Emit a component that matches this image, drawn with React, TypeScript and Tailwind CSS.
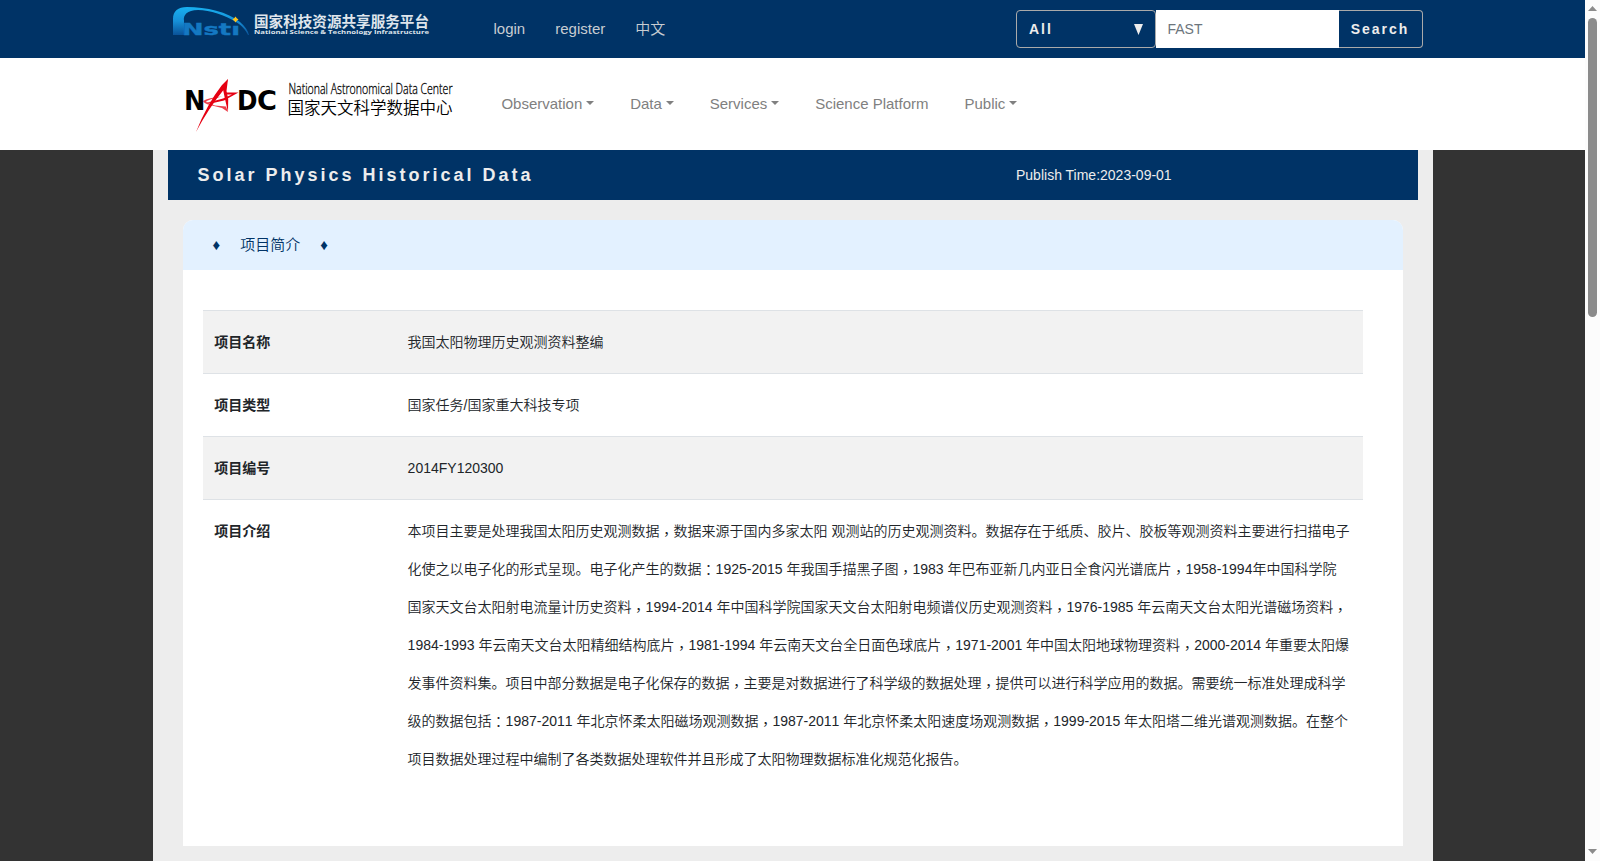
import React from "react";

const rows: { label: string; lines: string[] }[] = [
  { label: "项目名称", lines: ["我国太阳物理历史观测资料整编"] },
  { label: "项目类型", lines: ["国家任务/国家重大科技专项"] },
  { label: "项目编号", lines: ["2014FY120300"] },
  {
    label: "项目介绍",
    lines: [
      "本项目主要是处理我国太阳历史观测数据，数据来源于国内多家太阳 观测站的历史观测资料。数据存在于纸质、胶片、胶板等观测资料主要进行扫描电子",
      "化使之以电子化的形式呈现。电子化产生的数据：1925-2015 年我国手描黑子图，1983 年巴布亚新几内亚日全食闪光谱底片，1958-1994年中国科学院",
      "国家天文台太阳射电流量计历史资料，1994-2014 年中国科学院国家天文台太阳射电频谱仪历史观测资料，1976-1985 年云南天文台太阳光谱磁场资料，",
      "1984-1993 年云南天文台太阳精细结构底片，1981-1994 年云南天文台全日面色球底片，1971-2001 年中国太阳地球物理资料，2000-2014 年重要太阳爆",
      "发事件资料集。项目中部分数据是电子化保存的数据，主要是对数据进行了科学级的数据处理，提供可以进行科学应用的数据。需要统一标准处理成科学",
      "级的数据包括：1987-2011 年北京怀柔太阳磁场观测数据，1987-2011 年北京怀柔太阳速度场观测数据，1999-2015 年太阳塔二维光谱观测数据。在整个",
      "项目数据处理过程中编制了各类数据处理软件并且形成了太阳物理数据标准化规范化报告。",
    ],
  },
];

const navItems = [
  { label: "Observation", caret: true },
  { label: "Data", caret: true },
  { label: "Services", caret: true },
  { label: "Science Platform", caret: false },
  { label: "Public", caret: true },
];

// Commas and colons are centred horizontally and sit near the baseline.
function Line({ text }: { text: string }) {
  return (
    <div>
      {text.split(/([，：])/).map((part, i) =>
        part === "，" || part === "：" ? (
          <span
            key={i}
            lang="zh-TW"
            className={
              part === "，"
                ? "align-[-3px] font-['Noto_Sans_CJK_TC',sans-serif] leading-none font-normal"
                : "align-[-1px] font-['Noto_Sans_CJK_TC',sans-serif] leading-none"
            }
          >
            {part}
          </span>
        ) : (
          part
        )
      )}
    </div>
  );
}

function NstiLogo() {
  return (
    <svg width="265" height="36" viewBox="170 4 265 36" className="block overflow-visible">
      <defs>
        <linearGradient id="swoosh" x1="0" y1="0" x2="0" y2="1">
          <stop offset="0" stopColor="#18b0f0" />
          <stop offset="0.500" stopColor="#1690d8" />
          <stop offset="1" stopColor="#0a5298" />
        </linearGradient>
      </defs>
      <path d="M173 35V19C173 11 178 7 187 7C206 7 228 12 240 22C245 26 248 31 249 35H248C246 30 241 25 236 22C225 15 210 10 198 10C187 10 183 15 184 21V35Z" fill="url(#swoosh)" />
      <text x="182" y="35" fontFamily="DejaVu Sans" fontWeight="700" fontSize="16.500" textLength="58" lengthAdjust="spacingAndGlyphs" fill="#1478c2" stroke="#1478c2" strokeWidth="0.400">Nstı</text>
      <path d="M235.500 16.500L236.800 18.200L238.500 19.500L236.800 20.800L235.500 22.500L234.200 20.800L232.500 19.500L234.200 18.200Z" fill="#ffc21a" />
      <text x="254" y="26.500" fontFamily="Noto Sans CJK SC" fontWeight="700" fontSize="14.600" textLength="175" lengthAdjust="spacingAndGlyphs" fill="#dfe5ec">国家科技资源共享服务平台</text>
      <text x="254" y="34" fontFamily="Open Sans" fontWeight="700" fontSize="5.800" textLength="175" lengthAdjust="spacingAndGlyphs" fill="#dfe5ec">National Science &amp; Technology Infrastructure</text>
    </svg>
  );
}

function NadcLogo() {
  return (
    <svg width="272" height="60" viewBox="184 76 272 60" className="block overflow-visible">
      <g fontFamily="DejaVu Sans" fontWeight="700" fontSize="27.400" fill="#000">
        <text x="184" y="110" textLength="21.500" lengthAdjust="spacingAndGlyphs">N</text>
        <text x="237" y="110" textLength="20.500" lengthAdjust="spacingAndGlyphs">D</text>
        <text x="257" y="110" textLength="20" lengthAdjust="spacingAndGlyphs">C</text>
      </g>
      <g fill="#e60012">
        <path d="M228 79L222 85Q207 104 196 132Q208 109 225 88Z" />
        <path d="M228 79L222.500 87L225 99L228 112L228.200 99L226.500 91Z" />
        <path d="M238.500 92.500L224 92.500L226 94.500L232 94.500L223 98.500L212 101.500L206 102.500L213 103L224 100.500Z" />
        <path d="M203 101Q208 97.500 222 96.500L214 98.500Q207 100 206 102L215 105.500L226 106.500L228 112L222 108L210 105Q204 103.500 203 101Z" fillOpacity="0.750" />
      </g>
      <text x="288.500" y="93.700" fontFamily="Open Sans" fontSize="14" textLength="164" lengthAdjust="spacingAndGlyphs" fill="#000" stroke="#000" strokeWidth="0.300">National Astronomical Data Center</text>
      <text x="287.500" y="113.700" fontFamily="Noto Sans CJK SC" fontWeight="350" fontSize="16.500" textLength="165" fill="#000">国家天文科学数据中心</text>
    </svg>
  );
}

function ScrollBar() {
  return (
    <div className="flex w-[15px] shrink-0 flex-col items-center bg-[#fcfcfc]">
      <svg width="15" height="18" viewBox="0 0 15 18" className="block"><path d="M3 11L7.500 6L12 11Z" fill="#8b8b8b" /></svg>
      <div className="h-[299px] w-[9px] rounded-full bg-[#8b8b8b]" />
      <svg width="15" height="18" viewBox="0 0 15 18" className="mt-auto block"><path d="M3 6L7.500 11L12 6Z" fill="#8b8b8b" /></svg>
    </div>
  );
}

export default function App() {
  return (
    <div className="flex h-[861px] w-[1600px] overflow-hidden font-['Liberation_Sans','Noto_Sans_CJK_SC',sans-serif] text-[14px] font-[350] text-[#212529]">
      <div className="flex min-w-0 flex-1 flex-col bg-[#333333]">
        <header className="flex h-[58px] shrink-0 bg-[#003366] pl-[170px] text-[15px] text-[#c8cdd2]">
          <div className="w-[323.5px] pt-1"><NstiLogo /></div>
          <nav className="flex h-[58px] w-[522.5px] items-center gap-[30px]">
            <a>login</a>
            <a>register</a>
            <a>中文</a>
          </nav>
          <form className="mt-[10px] flex h-[38px] text-[14px] font-bold text-[#ededed]">
            <div className="flex w-[139.5px] items-center justify-between rounded border border-[#aaaaaa] pr-[11.5px] pl-3 tracking-[2px]">
              <span>All</span>
              <svg width="9" height="11" viewBox="0 0 9 11"><path d="M0 0H9L4.500 11Z" fill="#ededed" /></svg>
            </div>
            <input className="w-[183.5px] bg-white px-[12px] font-normal text-[#495057] outline-none placeholder:text-[#6c757d]" placeholder="FAST" />
            <button type="button" className="w-[84px] rounded-r border border-l-0 border-[#aaaaaa] pr-px tracking-[2px]">Search</button>
          </form>
        </header>
        <div className="flex h-[92px] shrink-0 bg-white pl-[184px]">
          <div className="w-[317.4px] pt-[18px]"><NadcLogo /></div>
          <nav className="flex h-[92px] items-center gap-[35.9px] text-[15px] text-[#808080]">
            {navItems.map((n) => (
              <a key={n.label} className="flex items-center gap-1">
                {n.label}
                {n.caret && <span className="mb-[2px] border-x-4 border-t-4 border-x-transparent border-t-[#808080]" />}
              </a>
            ))}
          </nav>
        </div>
        <main className="ml-[153px] w-[1280px] flex-1 bg-[#ededed] px-[15px]">
          <div className="flex h-[50px] items-center bg-[#003366] pl-[29.5px] text-[#ededed]">
            <h1 className="w-[818.5px] text-[18px] font-bold tracking-[3px]">Solar Physics Historical Data</h1>
            <span>Publish Time:2023-09-01</span>
          </div>
          <section className="mx-[15px] mt-5 h-[626px] overflow-hidden rounded-t-[10px] bg-white">
            <h2 className="flex h-[50px] items-center gap-5 bg-[#e3f1ff] pl-[29.5px] text-[15px] font-[350] text-[#003366]">
              <span>♦</span><span>项目简介</span><span>♦</span>
            </h2>
            <table className="mt-10 ml-5 w-[1160px] table-fixed border-collapse [font-kerning:none]">
              <tbody>
                {rows.map((r) => (
                  <tr key={r.label} className="border-t border-[#dee2e6] odd:bg-[#f2f2f2]">
                    <th className="w-[193px] py-3 pl-[11.2px] text-left align-top leading-[38px] font-bold">{r.label}</th>
                    <td className="py-3 pl-[11.6px] leading-[38px] whitespace-nowrap">
                      {r.lines.map((l) => <Line key={l} text={l} />)}
                    </td>
                  </tr>
                ))}
              </tbody>
            </table>
          </section>
        </main>
      </div>
      <ScrollBar />
    </div>
  );
}
